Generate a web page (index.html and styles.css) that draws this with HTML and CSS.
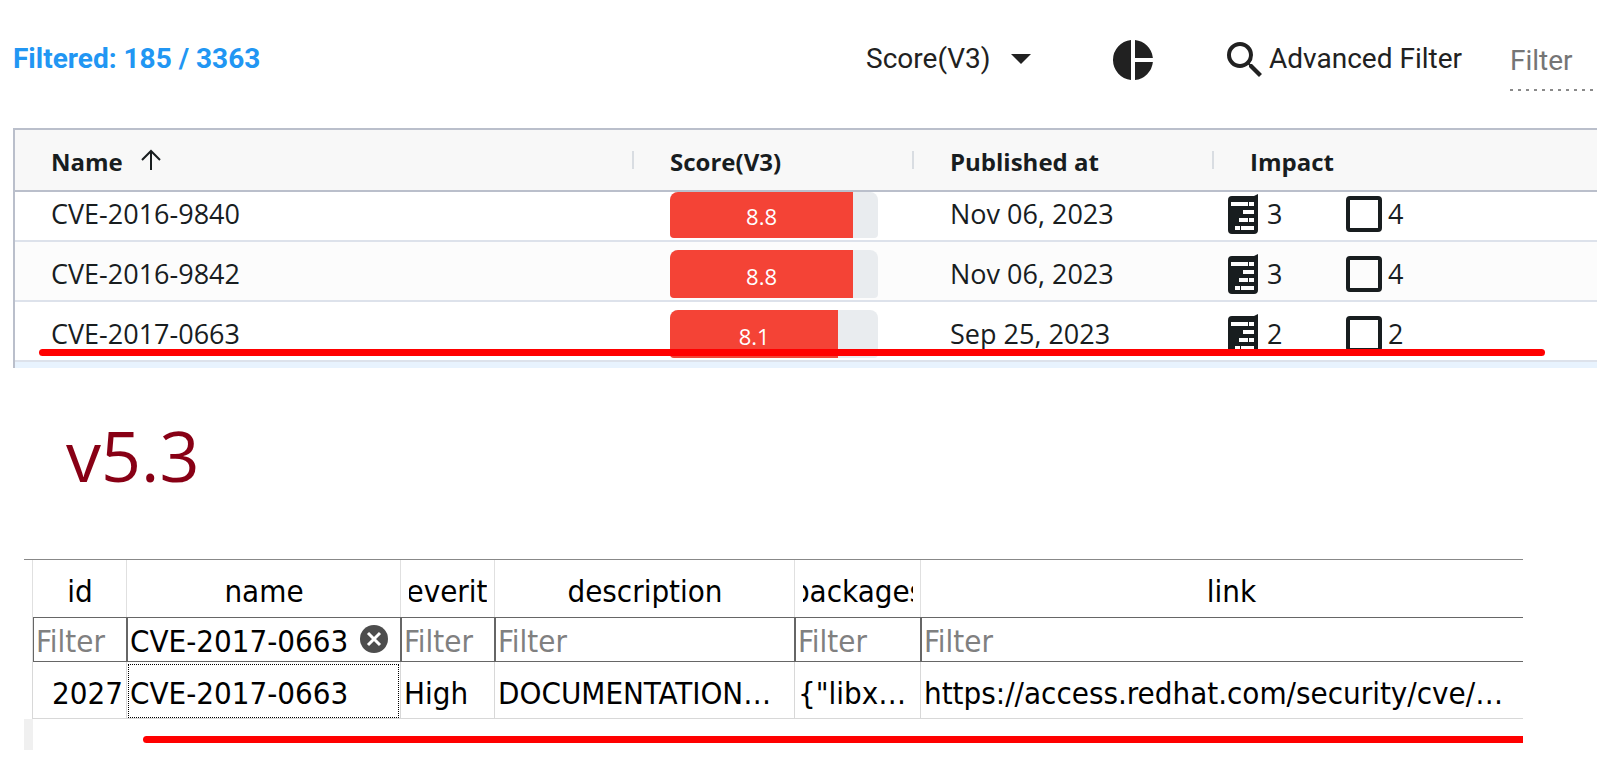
FILE: index.html
```
<!DOCTYPE html>
<html lang="en">
<head>
<meta charset="utf-8">
<title>Vulnerabilities</title>
<link rel="stylesheet" href="styles.css">
</head>
<body>
<svg class="symbols">
  <symbol id="server" viewBox="0 0 30 40">
    <path fill="currentColor" fill-rule="evenodd" d="M4 2H26L30 0V36a4 4 0 0 1-4 4H4a4 4 0 0 1-4-4V6a4 4 0 0 1 4-4ZM3 8v4h17V8ZM21 8v4h5V8ZM15 16v4h11v-4ZM11 24v4h9v-4ZM21 24v4h5v-4ZM7 32v4h5v-4ZM13 32v4h13v-4Z"/>
  </symbol>
  <symbol id="box" viewBox="0 0 36 36">
    <rect x="2" y="2" width="32" height="32" rx="2" fill="none" stroke="currentColor" stroke-width="4"/>
  </symbol>
</svg>

<section class="panel">
  <div class="toolbar">
    <strong class="count">Filtered: 185 / 3363</strong>
    <div class="sort">
      <select class="sort-select" aria-label="Sort field"><option>Score(V3)</option></select>
      <svg class="caret" viewBox="0 0 20 10"><path d="M0 0H20L10 10Z"/></svg>
    </div>
    <button class="icon-button" type="button" aria-label="Chart">
      <svg class="pie" viewBox="0 0 40 40"><path d="M18 39.900A20 20 0 0 1 18 .1ZM22 .1A20 20 0 0 1 39.900 18H22ZM22 22H39.900A20 20 0 0 1 22 39.900Z"/></svg>
    </button>
    <button class="advanced" type="button">
      <svg class="search" viewBox="3 3 17.500 17.500"><path d="M15.500 14h-.79l-.28-.27A6.470 6.470 0 0 0 16 9.500 6.500 6.500 0 1 0 9.500 16c1.610 0 3.090-.59 4.230-1.570l.27.28v.79l5 4.990L20.490 19l-4.990-5zm-6 0C7.010 14 5 11.990 5 9.500S7.010 5 9.500 5 14 7.010 14 9.500 11.990 14 9.500 14z"/></svg>
      <span>Advanced Filter</span>
    </button>
    <input class="quick-filter" type="text" placeholder="Filter" aria-label="Filter">
  </div>

  <div class="grid-wrap">
    <table class="grid">
      <colgroup><col class="g-name"><col class="g-score"><col class="g-date"><col></colgroup>
      <thead>
        <tr>
          <th><div class="head">Name <svg class="arrow" viewBox="0 0 20 22"><path d="M10 21V2M1 11L10 2L19 11"/></svg></div></th>
          <th><div class="head">Score(V3)</div></th>
          <th><div class="head">Published at</div></th>
          <th><div class="head">Impact</div></th>
        </tr>
      </thead>
      <tbody>
        <tr class="cut">
          <td>CVE-2016-9840</td>
          <td class="score"><div class="bar"><div class="fill" style="width:88%">8.8</div></div></td>
          <td>Nov 06, 2023</td>
          <td class="impact"><div class="pair"><svg class="server"><use href="#server"/></svg><span class="num">3</span><svg class="box"><use href="#box"/></svg><span>4</span></div></td>
        </tr>
        <tr class="alt">
          <td>CVE-2016-9842</td>
          <td class="score"><div class="bar"><div class="fill" style="width:88%">8.8</div></div></td>
          <td>Nov 06, 2023</td>
          <td class="impact"><div class="pair"><svg class="server"><use href="#server"/></svg><span class="num">3</span><svg class="box"><use href="#box"/></svg><span>4</span></div></td>
        </tr>
        <tr>
          <td>CVE-2017-0663</td>
          <td class="score"><div class="bar"><div class="fill" style="width:81%">8.1</div></div></td>
          <td>Sep 25, 2023</td>
          <td class="impact"><div class="pair"><svg class="server"><use href="#server"/></svg><span class="num">2</span><svg class="box"><use href="#box"/></svg><span>2</span></div></td>
        </tr>
      </tbody>
    </table>
    <div class="next-row"></div>
    <div class="mark"></div>
  </div>
</section>

<h1 class="version">v5.3</h1>

<section class="db">
  <table class="sheet">
    <colgroup><col class="c-gutter"><col class="c-id"><col class="c-name"><col class="c-severity"><col class="c-description"><col class="c-packages"><col></colgroup>
    <thead>
      <tr class="titles">
        <td></td>
        <th><div class="clip"><span>id</span></div></th>
        <th><div class="clip"><span>name</span></div></th>
        <th><div class="clip"><span>severity</span></div></th>
        <th><div class="clip"><span>description</span></div></th>
        <th><div class="clip"><span>packages</span></div></th>
        <th class="last"><div class="clip"><span>link</span></div></th>
      </tr>
      <tr class="filters">
        <td></td>
        <td><input type="text" placeholder="Filter" aria-label="Filter id"></td>
        <td><div class="filled"><input type="text" value="CVE-2017-0663" aria-label="Filter name"><button class="clear" type="button" aria-label="Clear"><svg viewBox="0 0 28 28"><circle cx="14" cy="14" r="14" fill="#4d4d4d"/><path d="M8 8L20 20M20 8L8 20" stroke="#fff" stroke-width="3"/></svg></button></div></td>
        <td><input type="text" placeholder="Filter" aria-label="Filter severity"></td>
        <td><input type="text" placeholder="Filter" aria-label="Filter description"></td>
        <td><input type="text" placeholder="Filter" aria-label="Filter packages"></td>
        <td><input class="open" type="text" placeholder="Filter" aria-label="Filter link"></td>
      </tr>
    </thead>
    <tbody>
      <tr class="record">
        <td></td>
        <td class="right">2027</td>
        <td><div class="focused">CVE-2017-0663</div></td>
        <td>High</td>
        <td>DOCUMENTATION…</td>
        <td>{"libx…</td>
        <td>https://access.redhat.com/security/cve/…</td>
      </tr>
    </tbody>
  </table>
  <div class="gutter"></div>
  <div class="mark mark-db"></div>
</section>
</body>
</html>
```

FILE: styles.css
```
* { box-sizing: border-box; }
body { margin: 0; background: #fff; color: #212121; font-family: Roboto, sans-serif; overflow-x: hidden; }
button, input, select { font: inherit; color: inherit; margin: 0; padding: 0; border: 0; background: none; border-radius: 0; outline: 0; }
svg { display: block; flex: none; }
.symbols { display: none; }
table { border-collapse: separate; border-spacing: 0; table-layout: fixed; width: 100%; }
th, td { padding: 0; text-align: left; white-space: nowrap; }

.panel { padding-left: 13px; }

.toolbar { display: flex; align-items: center; height: 128px; padding: 0 3px 8px 0; font-size: 28px; line-height: 32px; }
.count { color: #2196f3; margin: 0 auto 2px 0; font-weight: 700; }
.sort { display: flex; align-items: center; position: relative; width: 165px; margin: 0 82px 2px 0; }
.sort-select { appearance: none; width: 100%; }
.caret { position: absolute; right: 0; width: 20px; height: 10px; fill: #212121; pointer-events: none; }
.pie { width: 40px; height: 40px; fill: #212121; }
.icon-button { margin-right: 74px; }
.advanced { display: flex; align-items: center; gap: 7px; margin: 0 48px 2px 0; }
.search { width: 35px; height: 35px; fill: #212121; }
.quick-filter {
  width: 84px; height: 62px;
  background: repeating-linear-gradient(90deg, #8a8a8a 0 3px, transparent 3px 8px) left bottom / 100% 2px no-repeat;
}
.quick-filter::placeholder { color: #757575; opacity: 1; }

.grid-wrap { position: relative; border-top: 2px solid #babfcb; border-left: 2px solid #babfcb; font-family: "Open Sans", "Noto Sans", sans-serif; color: #181d1f; }
.g-name { width: 619px; }
.g-score { width: 280px; }
.g-date { width: 300px; }
.grid th {
  height: 62px; border-bottom: 2px solid #babfcb; font-size: 24px; line-height: 34px; font-weight: 700;
  background: #f8f8f8 linear-gradient(#d9dde2, #d9dde2) right 21px / 2px 18px no-repeat;
}
.grid th:last-child { background-image: none; }
.head { display: flex; align-items: center; padding: 4px 0 0 36px; }
.arrow { width: 20px; height: 22px; margin: -4px 0 0 18px; fill: none; stroke: #181d1f; stroke-width: 2; }
.grid tbody td { height: 60px; padding: 0 0 6px 36px; border-bottom: 2px solid #dde2eb; vertical-align: bottom; font-size: 27px; line-height: 40px; font-weight: 400; }
.grid .cut td { height: 50px; }
.grid .alt td { background: #fcfcfc; }
.grid tbody .score { padding-bottom: 2px; }
.bar { width: 208px; height: 48px; border-radius: 8px 8px 4px 4px; background: #e9ecef; overflow: hidden; }
.cut .bar { height: 46px; }
.fill { height: 100%; display: flex; align-items: flex-end; justify-content: center; padding-bottom: 7px; background: #f44336; color: #fff; font-size: 22px; line-height: 30px; }
.grid tbody .impact { padding: 0 0 6px 14px; }
.pair { display: flex; align-items: flex-end; }
.server { width: 30px; height: 40px; margin-right: 9px; }
.box { width: 36px; height: 36px; margin: 0 6px 2px 0; }
.num { width: 79px; }
.next-row { height: 6px; background: #e8f3fe; }
.mark { position: absolute; left: 24px; right: 52px; top: 219px; height: 7px; border-radius: 4px; background: #f00; }

.version { margin: 36px 0 0 66px; font-family: "Open Sans", "Noto Sans", sans-serif; font-size: 70px; line-height: 102px; font-weight: 400; color: #880015; }

.db { position: relative; margin: 53px 74px 0 24px; border-top: 1px solid #888; font-family: "DejaVu Sans Condensed", "Noto Sans", sans-serif; font-size: 31px; line-height: 36px; color: #000; }
.c-gutter { width: 9px; }
.c-id, .c-severity { width: 94px; }
.c-name { width: 274px; }
.c-description { width: 300px; }
.c-packages { width: 126px; }
.titles th, .titles td { height: 57px; border-right: 1px solid #e0e0e0; font-weight: 400; }
.titles .last, .record td:last-child { border-right: 0; }
.titles .last { padding-left: 18px; }
.clip { display: flex; justify-content: center; margin: 4px 7px 0 8px; overflow: hidden; }
.filters td { height: 45px; }
.filters td:first-child { border-right: 1px solid #e0e0e0; }
.filters input { display: block; width: 100%; height: 45px; padding: 2px 0 0 2px; border: 1px solid #666; }
.filters .open { border-right: 0; }
.filters input::placeholder { color: #808080; opacity: 1; }
.filled { position: relative; }
.clear { position: absolute; right: 13px; top: 8px; width: 28px; height: 28px; }
.record td { height: 57px; padding: 6px 0 0 3px; border-right: 1px solid #d8d8d8; border-bottom: 1px solid #d8d8d8; overflow: hidden; }
.record td:first-child { padding: 0; border-bottom: 0; }
.record .right { text-align: right; padding-right: 3px; }
.record td:nth-child(3) { padding: 2px 1px 0; }
.focused { height: 54px; padding: 10px 0 0 1px; border: 1px dotted #000; }
.gutter { width: 9px; height: 31px; background: #f0f0f0; }
.mark-db { left: 119px; right: 0; top: 176px; border-radius: 4px 0 0 4px; }
```
